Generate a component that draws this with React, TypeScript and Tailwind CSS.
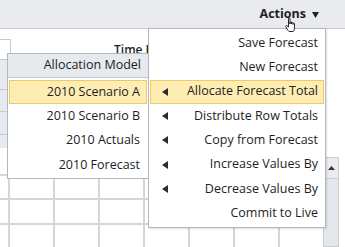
import React from "react";

const font = { fontFamily: '"Open Sans", "Noto Sans", sans-serif' };

function Arrow() {
  return (
    <svg width="6" height="8" viewBox="0 0 6 8" className="shrink-0">
      <polygon points="6,0 6,8 0,4" fill="#2b2b2b" />
    </svg>
  );
}

function Hand() {
  return (
    <svg width="12" height="16" viewBox="0 0 12 16" className="absolute left-[285px] top-[17px]">
      <path
        d="M3.5 1.5 C3.5 0.8 5 0.8 5 1.5 L5 7 L5 5.5 C5 4.8 6.5 4.8 6.5 5.5 L6.5 7 L6.5 6 C6.5 5.3 8 5.3 8 6 L8 7.5 L8 6.8 C8 6.1 9.5 6.1 9.5 6.8 L9.5 11 C9.5 13 8.5 14.5 8 14.5 L4 14.5 C3 13.5 1.5 11 0.8 9.8 C0.3 9 1.2 8.2 2 8.8 L3.5 10 Z"
        fill="#fff"
        stroke="#111"
        strokeWidth="0.9"
        strokeLinejoin="round"
      />
    </svg>
  );
}

const mainItems: { label: string; arrow: boolean; active?: boolean }[] = [
  { label: "Save Forecast", arrow: false },
  { label: "New Forecast", arrow: false },
  { label: "Allocate Forecast Total", arrow: true, active: true },
  { label: "Distribute Row Totals", arrow: true },
  { label: "Copy from Forecast", arrow: true },
  { label: "Increase Values By", arrow: true },
  { label: "Decrease Values By", arrow: true },
  { label: "Commit to Live", arrow: false },
];

const subItems = [
  { label: "2010 Scenario A", active: true },
  { label: "2010 Scenario B" },
  { label: "2010 Actuals" },
  { label: "2010 Forecast" },
];

function GridRow() {
  return (
    <div className="flex h-[25px] border-t-2 border-[#d6d6d6]">
      <div className="w-[10px] border-r-2 border-[#d6d6d6]" />
      {[0, 1, 2, 3, 4, 5].map((i) => (
        <div key={i} className="w-[45px] border-r-2 border-[#d6d6d6]" />
      ))}
      <div className="flex-1" />
    </div>
  );
}

export default function App() {
  return (
    <div
      className="relative w-[345px] h-[247px] overflow-hidden bg-white text-[#1e1e1e]"
      style={font}
    >
      {/* top bar */}
      <div className="flex h-[29px] items-center justify-end border-b border-[#c6cad0] bg-[#e9ebef] pr-[26px]">
        <span className="text-[12.5px] font-bold text-[#1f1f1f]">Actions</span>
        <svg width="7" height="6" viewBox="0 0 7 6" className="ml-[6px] mt-[1px]">
          <polygon points="0,0 7,0 3.5,6" fill="#222" />
        </svg>
      </div>

      {/* background content */}
      <div className="flex h-[218px]">
        <div className="flex w-[323px] flex-col">
          <div className="relative h-[150px]">
            <div className="absolute left-0 top-[10px] h-[21px] w-[11px] border border-l-0 border-[#c8ccd2] bg-white" />
            <div className="absolute left-0 top-[31px] flex w-[8px] flex-col">
              <div className="h-[30px] border-b border-[#c8ccd2] bg-[#e6e9ee]" />
              <div className="h-[22px] border-b border-[#c8ccd2] bg-[#e6e9ee]" />
              <div className="h-[23px] border-b border-[#c8ccd2] bg-[#e6e9ee]" />
              <div className="h-[13px] bg-[#e6e9ee]" />
            </div>
            <div className="absolute left-[114px] top-[15px] whitespace-nowrap text-[12px] font-semibold leading-none">
              Time Period
            </div>
          </div>
          <GridRow />
          <GridRow />
          <GridRow />
        </div>
        <div className="mt-[128px] flex w-[16px] flex-col border border-[#c9cdd3] bg-[#e9ebee]">
          <div className="flex h-[21px] items-center justify-center border-b border-[#c9cdd3]">
            <svg width="7" height="4" viewBox="0 0 7 4">
              <polygon points="0,4 7,4 3.5,0" fill="#333" />
            </svg>
          </div>
          <div className="flex-1 bg-[#e4e7eb]" />
        </div>
        <div className="flex-1 bg-white" />
      </div>

      {/* sub menu */}
      <div className="absolute left-[7px] top-[53px] flex w-[142px] flex-col border border-[#b3b8c0] bg-white pb-[1px] text-[12.5px]">
        <div className="flex h-[24px] items-center justify-end border-b border-[#c4c9d0] bg-[#e6e9ee] pr-[7px]">
          Allocation Model
        </div>
        <div className="flex flex-col px-px pt-[2px]">
          {subItems.map((it) => (
            <div
              key={it.label}
              className={
                "flex h-[24.3px] items-center justify-end pr-[6px] " +
                (it.active ? "border border-[#f1c863] bg-[#fdedb3]" : "border border-transparent")
              }
            >
              {it.label}
            </div>
          ))}
        </div>
      </div>

      {/* main menu */}
      <div className="absolute left-[148px] top-[28px] flex h-[200px] w-[178px] flex-col border border-[#b3b8c0] bg-white px-px pt-[2px] text-[12.5px] shadow-[1px_1px_2px_rgba(0,0,0,0.12)]">
        {mainItems.map((it) => (
          <div
            key={it.label}
            className={
              "flex h-[24.3px] items-center pl-[11px] pr-[5px] " +
              (it.active ? "border border-[#f1c863] bg-[#fdedb3]" : "border border-transparent")
            }
          >
            {it.arrow ? <Arrow /> : null}
            <span className="ml-auto">{it.label}</span>
          </div>
        ))}
      </div>

      <Hand />
    </div>
  );
}
